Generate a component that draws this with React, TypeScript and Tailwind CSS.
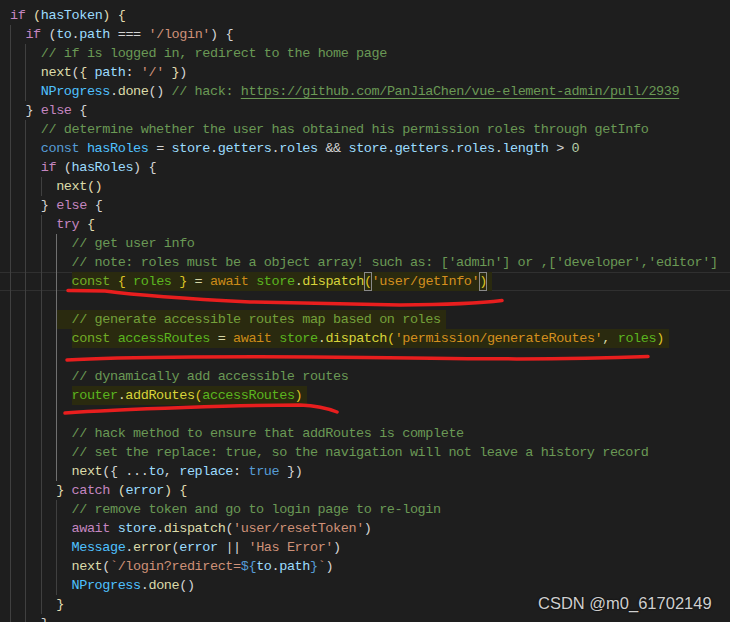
import React from 'react'

// token colours (VS Code Dark+)
const kw = 'text-[#c586c0]'
const st = 'text-[#569cd6]'
const v = 'text-[#9cdcfe]'
const fn = 'text-[#dcdcaa]'
const cl = 'text-[#4fc1ff]'
const s = 'text-[#ce9178]'
const cm = 'text-[#6a9955]'
const p = 'text-[#d4d4d4]'
const n = 'text-[#b5cea8]'
const b1 = 'text-[#e2dcb0]'
const b2 = 'text-[#d4d4d4]'
const b3 = 'text-[#d4d4d4]'

// highlighted-line colours
const hc = 'text-[#72ad26]'
const hv = 'text-[#5bb51f]'
const ha = 'text-[#cc8a18]'
const hf = 'text-[#d8d43a]'
const hs = 'text-[#d48f1e]'
const hp = 'text-[#d6d6a6]'
const hb = 'text-[#dcc424]'
const hcm = 'text-[#74a03a]'
const box = 'outline outline-1 -outline-offset-1 outline-[#8a8a8a]'
const url = 'underline underline-offset-[3px]'

type Tok = [string, string, string?]
type Line = { indent: number; toks: Tok[]; hl?: boolean; hlGuide?: boolean; current?: boolean }

const lines: Line[] = [
  { indent: 0, toks: [['if', kw], [' ', p], ['(', b1], ['hasToken', v], [')', b1], [' ', p], ['{', b1]] },
  { indent: 1, toks: [['if', kw], [' ', p], ['(', b2], ['to', v], ['.', p], ['path', v], [' === ', p], ["'/login'", s], [')', b2], [' ', p], ['{', b2]] },
  { indent: 2, toks: [['// if is logged in, redirect to the home page', cm]] },
  { indent: 2, toks: [['next', fn], ['(', b3], ['{', b1], [' path', v], [': ', p], ["'/'", s], [' ', p], ['}', b1], [')', b3]] },
  { indent: 2, toks: [['NProgress', cl], ['.', p], ['done', fn], ['(', b3], [')', b3], [' // hack: ', cm], ['https://github.com/PanJiaChen/vue-element-admin/pull/2939', cm, url]] },
  { indent: 1, toks: [['}', b2], [' ', p], ['else', kw], [' ', p], ['{', b2]] },
  { indent: 2, toks: [['// determine whether the user has obtained his permission roles through getInfo', cm]] },
  { indent: 2, toks: [['const', st], [' ', p], ['hasRoles', cl], [' = ', p], ['store', v], ['.', p], ['getters', v], ['.', p], ['roles', v], [' && ', p], ['store', v], ['.', p], ['getters', v], ['.', p], ['roles', v], ['.', p], ['length', v], [' > ', p], ['0', n]] },
  { indent: 2, toks: [['if', kw], [' ', p], ['(', b3], ['hasRoles', v], [')', b3], [' ', p], ['{', b3]] },
  { indent: 3, toks: [['next', fn], ['(', b1], [')', b1]] },
  { indent: 2, toks: [['}', b3], [' ', p], ['else', kw], [' ', p], ['{', b3]] },
  { indent: 3, toks: [['try', kw], [' ', p], ['{', b1]] },
  { indent: 4, toks: [['// get user info', cm]] },
  { indent: 4, toks: [["// note: roles must be a object array! such as: ['admin'] or ,['developer','editor']", cm]] },
  {
    indent: 4,
    hl: true,
    current: true,
    toks: [['const', hc], [' ', p], ['{', hb], [' roles ', hv], ['}', hb], [' = ', hp], ['await', ha], [' ', p], ['store', hv], ['.', hp], ['dispatch', hf], ['(', hb, box], ["'user/getInfo'", hs], [')', hb, box]],
  },
  { indent: 4, toks: [] },
  { indent: 4, hl: true, hlGuide: true, toks: [['// generate accessible routes map based on roles', hcm]] },
  {
    indent: 4,
    hl: true,
    toks: [['const', hc], [' ', p], ['accessRoutes', hv], [' = ', hp], ['await', ha], [' ', p], ['store', hv], ['.', hp], ['dispatch', hf], ['(', hb], ["'permission/generateRoutes'", hs], [', ', hp], ['roles', hv], [')', hb]],
  },
  { indent: 4, toks: [] },
  { indent: 4, toks: [['// dynamically add accessible routes', cm]] },
  { indent: 4, hl: true, toks: [['router', hv], ['.', hp], ['addRoutes', hf], ['(', hb], ['accessRoutes', hv], [')', hb]] },
  { indent: 4, toks: [] },
  { indent: 4, toks: [['// hack method to ensure that addRoutes is complete', cm]] },
  { indent: 4, toks: [['// set the replace: true, so the navigation will not leave a history record', cm]] },
  { indent: 4, toks: [['next', fn], ['(', b2], ['{', b3], [' ...', p], ['to', v], [', ', p], ['replace', v], [': ', p], ['true', st], [' ', p], ['}', b3], [')', b2]] },
  { indent: 3, toks: [['}', b1], [' ', p], ['catch', kw], [' ', p], ['(', b1], ['error', v], [')', b1], [' ', p], ['{', b1]] },
  { indent: 4, toks: [['// remove token and go to login page to re-login', cm]] },
  { indent: 4, toks: [['await', kw], [' ', p], ['store', v], ['.', p], ['dispatch', fn], ['(', b2], ["'user/resetToken'", s], [')', b2]] },
  { indent: 4, toks: [['Message', cl], ['.', p], ['error', fn], ['(', b2], ['error', v], [' || ', p], ["'Has Error'", s], [')', b2]] },
  { indent: 4, toks: [['next', fn], ['(', b2], ['`/login?redirect=', s], ['${', st], ['to', v], ['.', p], ['path', v], ['}', st], ['`', s], [')', b2]] },
  { indent: 4, toks: [['NProgress', cl], ['.', p], ['done', fn], ['(', b2], [')', b2]] },
  { indent: 3, toks: [['}', b1]] },
  { indent: 2, toks: [['}', b3]] },
]

function CodeLine({ line, index }: { line: Line; index: number }) {
  const guides = Array.from({ length: line.indent }, (_, lvl) => {
    const active = lvl === 3 && index >= 12 && index <= 24
    const bg = line.hlGuide && lvl === line.indent - 1 ? 'bg-[#2a2a0f]' : ''
    return (
      <span
        key={lvl}
        className={`inline-block h-[19px] w-[15.38px] shrink-0 border-l ${active ? 'border-[#707070]' : 'border-[#404040]'} ${bg}`}
      />
    )
  })
  const body = line.toks.map(([t, c, extra], i) => (
    <span key={i} className={`${c} ${extra ?? ''}`}>
      {t}
    </span>
  ))
  return (
    <div
      className={`flex h-[19px] items-center pl-[10px] ${line.current ? 'border-y border-[#303030]' : ''}`}
    >
      {guides}
      {line.hl ? <span className="flex h-[19px] items-center bg-[#2a2a0f] pr-[5px]">{body}</span> : body}
    </div>
  )
}

export default function App() {
  return (
    <div className="relative h-[622px] w-[730px] overflow-hidden bg-[#1e1e1e] pt-[6px] font-['Liberation_Mono',monospace] text-[13.5px] leading-[19px] tracking-[-0.41px] whitespace-pre">
      {lines.map((line, i) => (
        <CodeLine key={i} line={line} index={i} />
      ))}

      {/* hand-drawn red marks */}
      <svg className="pointer-events-none absolute inset-0" width="730" height="622" viewBox="0 0 730 622" fill="none">
        <g stroke="#e81e1e" strokeWidth="3.5" strokeLinecap="round" strokeLinejoin="round">
          <path d="M68 290.5 L105 291 Q150 297 250 302 L400 305 Q470 304.5 502 300.5" />
          <path d="M67 360 C120 357 250 356 365 357.5 S560 360 648 356.5" />
          <path d="M65 413 C120 409 250 405 300 405 Q322 406 337 412" />
        </g>
      </svg>

      <div className="absolute left-[538px] top-[592px] font-['Liberation_Sans',Arial,sans-serif] text-[16.5px] leading-[22px] tracking-normal text-[#cfcfcf] [text-shadow:0_0_2px_#000]">
        CSDN @m0_61702149
      </div>
    </div>
  )
}
